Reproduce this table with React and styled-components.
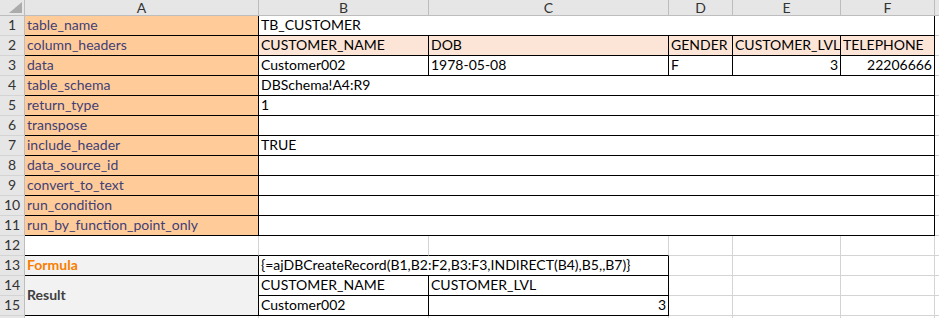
import React from "react";
import styled, { createGlobalStyle } from "styled-components";

const GlobalStyle = createGlobalStyle`
  html, body { margin: 0; padding: 0; background: #ffffff; }
  body { font-family: Lato, "Liberation Sans", sans-serif; overflow: hidden; }
`;

const BLACK = "#000000";
const GRID = "#D4D4D4";
const HEAD_LINE = "#BDBDBD";

const Sheet = styled.div`
  display: grid;
  grid-template-columns: 25px 234px 170px 240px 64px 108px 94px 40px;
  grid-template-rows: 16px repeat(16, 20px);
  width: 939px;
  height: 318px;
  overflow: hidden;
  background: #ffffff;
`;

const HeaderCell = styled.div`
  grid-row: 1;
  grid-column: ${(p) => p.$col};
  box-sizing: border-box;
  background: #e6e6e6;
  border-right: 1px solid ${HEAD_LINE};
  border-bottom: 1px solid ${HEAD_LINE};
  color: #333333;
  font-size: 14px;
  line-height: 15px;
  text-align: center;
  overflow: hidden;
`;

const Corner = styled(HeaderCell)`
  grid-column: 1;
  display: flex;
  align-items: flex-start;
  justify-content: flex-start;
`;

const RowNum = styled.div`
  grid-column: 1;
  grid-row: ${(p) => p.$row};
  box-sizing: border-box;
  background: #e6e6e6;
  border-right: 1px solid ${HEAD_LINE};
  border-bottom: 1px solid ${GRID};
  color: #333333;
  font-size: 14px;
  display: flex;
  align-items: flex-end;
  justify-content: center;
  padding-bottom: 1px;
  line-height: 18px;
`;

const variants = {
  plain: { bg: "#ffffff", color: "#000000", weight: 400 },
  input: { bg: "#FFCC99", color: "#3F3F76", weight: 400 },
  head: { bg: "#FCE4D6", color: "#000000", weight: 400 },
  calc: { bg: "#F2F2F2", color: "#FA7D00", weight: 700 },
  output: { bg: "#F2F2F2", color: "#3F3F3F", weight: 700 },
};

const Cell = styled.div`
  grid-row: ${(p) => p.$row} / span ${(p) => p.$rowSpan || 1};
  grid-column: ${(p) => p.$col} / span ${(p) => p.$colSpan || 1};
  box-sizing: border-box;
  background: ${(p) => variants[p.$variant || "plain"].bg};
  color: ${(p) => variants[p.$variant || "plain"].color};
  font-weight: ${(p) => variants[p.$variant || "plain"].weight};
  border-right: 1px solid ${(p) => p.$right || GRID};
  border-bottom: 1px solid ${(p) => p.$bottom || GRID};
  font-size: 14px;
  line-height: 18px;
  white-space: nowrap;
  overflow: hidden;
  display: flex;
  align-items: ${(p) => (p.$middle ? "center" : "flex-end")};
  justify-content: ${(p) => (p.$align === "right" ? "flex-end" : "flex-start")};
  padding: 0 2px 1px 2px;
`;

const cols = ["A", "B", "C", "D", "E", "F", ""];

const paramNames = [
  "table_name",
  "column_headers",
  "data",
  "table_schema",
  "return_type",
  "transpose",
  "include_header",
  "data_source_id",
  "convert_to_text",
  "run_condition",
  "run_by_function_point_only",
];

const B = BLACK;

const cells = [];
paramNames.forEach((name, i) => {
  cells.push({ r: i + 1, c: 1, text: name, variant: "input", right: B, bottom: B });
});
cells.push({ r: 1, c: 2, cs: 5, text: "TB_CUSTOMER", right: B, bottom: B });
["CUSTOMER_NAME", "DOB", "GENDER", "CUSTOMER_LVL", "TELEPHONE"].forEach((t, i) =>
  cells.push({ r: 2, c: 2 + i, text: t, variant: "head", right: B, bottom: B })
);
[
  { t: "Customer002" },
  { t: "1978-05-08" },
  { t: "F" },
  { t: "3", a: "right" },
  { t: "22206666", a: "right" },
].forEach((d, i) =>
  cells.push({ r: 3, c: 2 + i, text: d.t, align: d.a, right: B, bottom: B })
);
const values = { 4: "DBSchema!A4:R9", 5: "1", 6: "", 7: "TRUE", 8: "", 9: "", 10: "", 11: "" };
Object.keys(values).forEach((r) =>
  cells.push({ r: Number(r), c: 2, cs: 5, text: values[r], right: B, bottom: B })
);
for (let r = 1; r <= 11; r++) cells.push({ r, c: 7, text: "" });
cells.push({ r: 12, c: 1, text: "", bottom: B });
cells.push({ r: 12, c: 2, text: "", bottom: B });
cells.push({ r: 12, c: 3, text: "", bottom: B });
for (let c = 4; c <= 7; c++) cells.push({ r: 12, c, text: "" });
cells.push({ r: 13, c: 1, text: "Formula", variant: "calc", right: B, bottom: B });
cells.push({
  r: 13,
  c: 2,
  cs: 2,
  text: "{=ajDBCreateRecord(B1,B2:F2,B3:F3,INDIRECT(B4),B5,,B7)}",
  right: B,
  bottom: B,
});
cells.push({ r: 14, c: 1, rs: 2, text: "Result", variant: "output", middle: true, right: B, bottom: B });
cells.push({ r: 14, c: 2, text: "CUSTOMER_NAME", right: B, bottom: B });
cells.push({ r: 14, c: 3, text: "CUSTOMER_LVL", right: B, bottom: B });
cells.push({ r: 15, c: 2, text: "Customer002", right: B, bottom: B });
cells.push({ r: 15, c: 3, text: "3", align: "right", right: B, bottom: B });
for (let r = 13; r <= 15; r++) for (let c = 4; c <= 7; c++) cells.push({ r, c, text: "" });
for (let c = 1; c <= 7; c++) cells.push({ r: 16, c, text: "" });

export default function App() {
  return (
    <>
      <GlobalStyle />
      <Sheet>
        <Corner $col={1}>
          <svg width="24" height="15" viewBox="0 0 24 15">
            <polygon points="22,2 22,13 9,13" fill="#ABABAB" />
          </svg>
        </Corner>
        {cols.map((l, i) => (
          <HeaderCell key={i} $col={i + 2}>
            {l}
          </HeaderCell>
        ))}
        {Array.from({ length: 16 }, (_, i) => (
          <RowNum key={i} $row={i + 2}>
            {i < 15 ? i + 1 : ""}
          </RowNum>
        ))}
        {cells.map((c, i) => (
          <Cell
            key={i}
            $row={c.r + 1}
            $col={c.c + 1}
            $rowSpan={c.rs}
            $colSpan={c.cs}
            $variant={c.variant}
            $right={c.right}
            $bottom={c.bottom}
            $align={c.align}
            $middle={c.middle}
          >
            {c.text}
          </Cell>
        ))}
      </Sheet>
    </>
  );
}
